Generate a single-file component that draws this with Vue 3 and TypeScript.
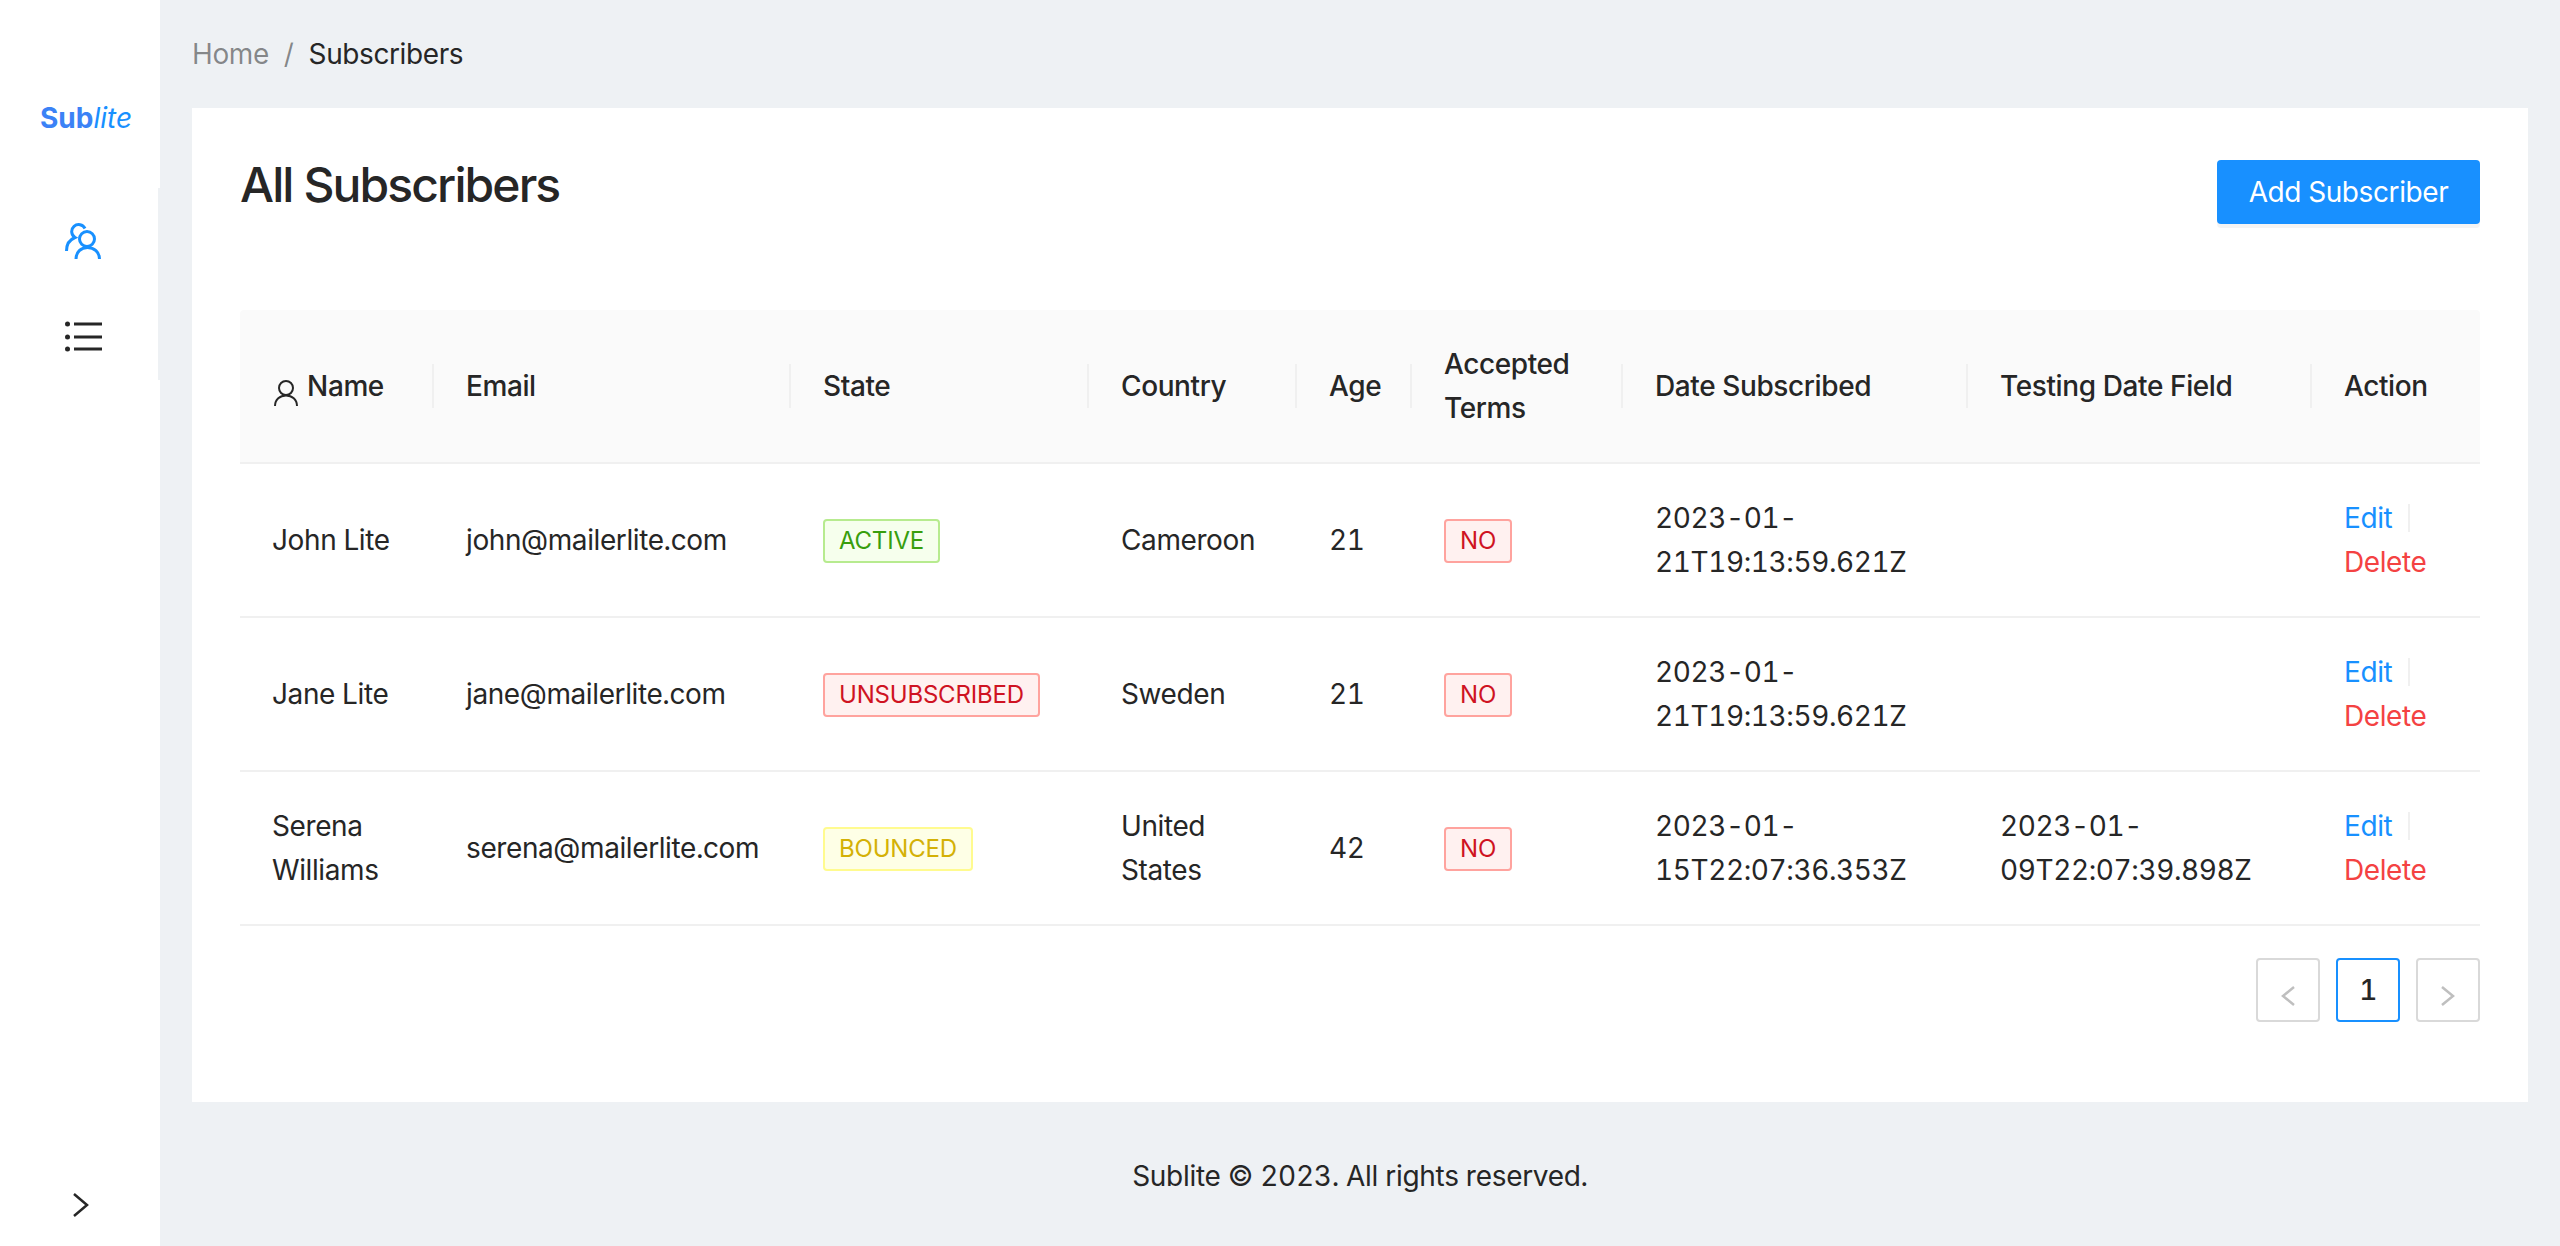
<script setup lang="ts">
interface Subscriber {
  name: string
  email: string
  state: 'active' | 'unsubscribed' | 'bounced'
  country: string
  age: number
  accepted: string
  subscribed: string
  testing: string
}

const columns = ['Email', 'State', 'Country', 'Age', 'Accepted Terms', 'Date Subscribed', 'Testing Date Field', 'Action']
const widths = [194, 357, 298, 208, 115, 211, 345, 344, 168]

const subscribers: Subscriber[] = [
  { name: 'John Lite', email: 'john@mailerlite.com', state: 'active', country: 'Cameroon', age: 21, accepted: 'NO', subscribed: '2023-01-21T19:13:59.621Z', testing: '' },
  { name: 'Jane Lite', email: 'jane@mailerlite.com', state: 'unsubscribed', country: 'Sweden', age: 21, accepted: 'NO', subscribed: '2023-01-21T19:13:59.621Z', testing: '' },
  { name: 'Serena Williams', email: 'serena@mailerlite.com', state: 'bounced', country: 'United States', age: 42, accepted: 'NO', subscribed: '2023-01-15T22:07:36.353Z', testing: '2023-01-09T22:07:39.898Z' }
]
</script>

<template>
  <div class="layout">
    <aside class="sider">
      <div class="logo"><b>Sub</b><i>lite</i></div>
      <nav class="menu">
        <a class="menu-item">
          <svg width="36" height="36" viewBox="0 0 36 36" fill="none" stroke="#1890ff" stroke-width="3">
            <circle cx="22" cy="16" r="7.5" />
            <path d="M11 36C11 29 16 24.5 22.5 24.5S34.5 29 34.5 36" />
            <path d="M20 5.5A7 7 0 1 0 10 14.5C5 16.5 1.5 21.5 1.5 28" />
          </svg>
        </a>
        <a class="menu-item list">
          <svg width="38" height="36" viewBox="0 0 38 36" fill="#262626">
            <circle cx="2.5" cy="3" r="2.5" />
            <circle cx="2.5" cy="16" r="2.5" />
            <circle cx="2.5" cy="28" r="2.5" />
            <rect x="9" y="1.500" width="28" height="3" />
            <rect x="9" y="14.500" width="28" height="3" />
            <rect x="9" y="26.500" width="28" height="3" />
          </svg>
        </a>
      </nav>
      <div class="trigger">
        <svg width="16" height="24" viewBox="0 0 16 24" fill="none" stroke="#262626" stroke-width="2.5">
          <path d="M1 1L14 12L1 23" />
        </svg>
      </div>
    </aside>

    <div class="main">
      <div class="breadcrumb">
        <span class="crumb-link">Home</span>
        <span class="crumb-sep">/</span>
        <span>Subscribers</span>
      </div>

      <section class="card">
        <header class="card-head">
          <h3>All Subscribers</h3>
          <button class="primary">Add Subscriber</button>
        </header>

        <table>
          <colgroup>
            <col v-for="(w, i) in widths" :key="i" :width="w" />
          </colgroup>
          <thead>
            <tr>
              <th>
                <svg class="user-icon" width="24" height="26" viewBox="0 0 24 26" fill="none" stroke="#262626" stroke-width="2">
                  <circle cx="12" cy="8" r="7" />
                  <path d="M1 26C1 19.500 6 15.500 12 15.500S23 19.500 23 26" />
                </svg>
                Name
              </th>
              <th v-for="col in columns" :key="col">{{ col }}</th>
            </tr>
          </thead>
          <tbody>
            <tr v-for="row in subscribers" :key="row.email">
              <td>{{ row.name }}</td>
              <td>{{ row.email }}</td>
              <td><span class="tag" :class="row.state">{{ row.state.toUpperCase() }}</span></td>
              <td>{{ row.country }}</td>
              <td>{{ row.age }}</td>
              <td><span class="tag unsubscribed">{{ row.accepted }}</span></td>
              <td>{{ row.subscribed }}</td>
              <td>{{ row.testing }}</td>
              <td>
                <a class="edit">Edit</a><span class="divider"></span>
                <a class="delete">Delete</a>
              </td>
            </tr>
          </tbody>
        </table>

        <div class="pagination">
          <span class="page muted">
            <svg width="14" height="20" viewBox="0 0 14 20" fill="none" stroke="#bfbfbf" stroke-width="2.5"><path d="M13 1L2 10L13 19" /></svg>
          </span>
          <span class="page active">1</span>
          <span class="page muted">
            <svg width="14" height="20" viewBox="0 0 14 20" fill="none" stroke="#bfbfbf" stroke-width="2.5"><path d="M1 1L12 10L1 19" /></svg>
          </span>
        </div>
      </section>

      <footer class="footer">Sublite © 2023. All rights reserved.</footer>
    </div>
  </div>
</template>

<style scoped>
.layout {
  display: flex;
  height: 1246px;
  background: #eef1f4;
  color: #262626;
  font-family: Inter, "Liberation Sans", sans-serif;
  font-size: 28px;
  line-height: 44px;
  letter-spacing: -0.4px;
  font-feature-settings: "tnum";
}

.sider {
  width: 160px;
  flex-shrink: 0;
  background: #fff;
  display: flex;
  flex-direction: column;
}

.logo {
  height: 188px;
  padding: 96px 0 0 40px;
  box-sizing: border-box;
  line-height: 44px;
  letter-spacing: 0;
  color: #1890ff;
}

.logo b {
  color: #3b82f6;
  font-weight: 700;
}

.menu {
  height: 192px;
  border-right: 2px solid #eef1f4;
}

.menu-item {
  display: flex;
  align-items: center;
  height: 96px;
  box-sizing: border-box;
  padding: 10px 0 0 65px;
}

.menu-item.list {
  padding-top: 14px;
}

.trigger {
  margin-top: auto;
  height: 58px;
  padding-left: 73px;
  box-sizing: border-box;
}

.trigger svg {
  display: block;
  margin-top: 5px;
}

.main {
  flex: 1;
  display: flex;
  flex-direction: column;
  min-width: 0;
}

.breadcrumb {
  display: flex;
  margin: 32px 32px 32px;
}

.crumb-link,
.crumb-sep {
  color: rgba(0, 0, 0, 0.45);
}

.crumb-sep {
  margin: 0 15px;
}

.card {
  flex: 1;
  margin-right: 32px;
  margin-left: 32px;
  padding: 48px;
  background: #fff;
}

.card-head {
  display: flex;
  justify-content: space-between;
  align-items: flex-start;
  margin-bottom: 86px;
}

h3 {
  margin: 0;
  font-size: 48px;
  font-weight: 500;
  line-height: 58px;
  letter-spacing: -1.9px;
}

.primary {
  height: 64px;
  width: 263px;
  margin-top: 4px;
  padding: 0;
  border: none;
  border-radius: 4px;
  background: #1890ff;
  color: #fff;
  font: inherit;
  letter-spacing: inherit;
  box-shadow: 0 4px 0 rgba(0, 0, 0, 0.045);
}

table {
  width: 2240px;
  table-layout: fixed;
  border-collapse: separate;
  border-spacing: 0;
}

th {
  position: relative;
  padding: 32px;
  background: #fafafa;
  border-bottom: 2px solid #f0f0f0;
  text-align: left;
  font-weight: 500;
}

th:first-child {
  border-top-left-radius: 4px;
}

th:last-child {
  border-top-right-radius: 4px;
}

th:not(:last-child)::before {
  content: "";
  position: absolute;
  top: 50%;
  right: 0;
  width: 2px;
  height: 44px;
  transform: translateY(-50%);
  background: #f0f0f0;
}

.user-icon {
  vertical-align: -10px;
  margin: 0 2px 0 2px;
}

td {
  padding: 32px;
  border-bottom: 2px solid #f0f0f0;
}

.tag {
  display: inline-block;
  padding: 0 14px;
  border: 2px solid;
  border-radius: 4px;
  font-size: 24px;
  line-height: 40px;
  letter-spacing: -0.2px;
  white-space: nowrap;
}

.active.tag {
  color: #389e0d;
  background: #f6ffed;
  border-color: #b7eb8f;
}

.unsubscribed {
  color: #cf1322;
  background: #fff1f0;
  border-color: #ffa39e;
}

.bounced {
  color: #d4b106;
  background: #feffe6;
  border-color: #fffb8f;
}

.edit {
  color: #1890ff;
}

.delete {
  color: #f44242;
}

.divider {
  display: inline-block;
  width: 2px;
  height: 28px;
  margin: 0 16px;
  vertical-align: -4px;
  background: #f0f0f0;
}

.pagination {
  display: flex;
  justify-content: flex-end;
  gap: 16px;
  margin-top: 32px;
}

.page {
  display: flex;
  align-items: center;
  justify-content: center;
  width: 64px;
  height: 64px;
  box-sizing: border-box;
  border: 2px solid #d9d9d9;
  border-radius: 4px;
  font-weight: 500;
}

.page.active {
  border-color: #1890ff;
}

.page svg {
  margin-top: 12px;
}

.footer {
  padding: 52px 100px 48px;
  text-align: center;
  letter-spacing: -0.3px;
}
</style>
